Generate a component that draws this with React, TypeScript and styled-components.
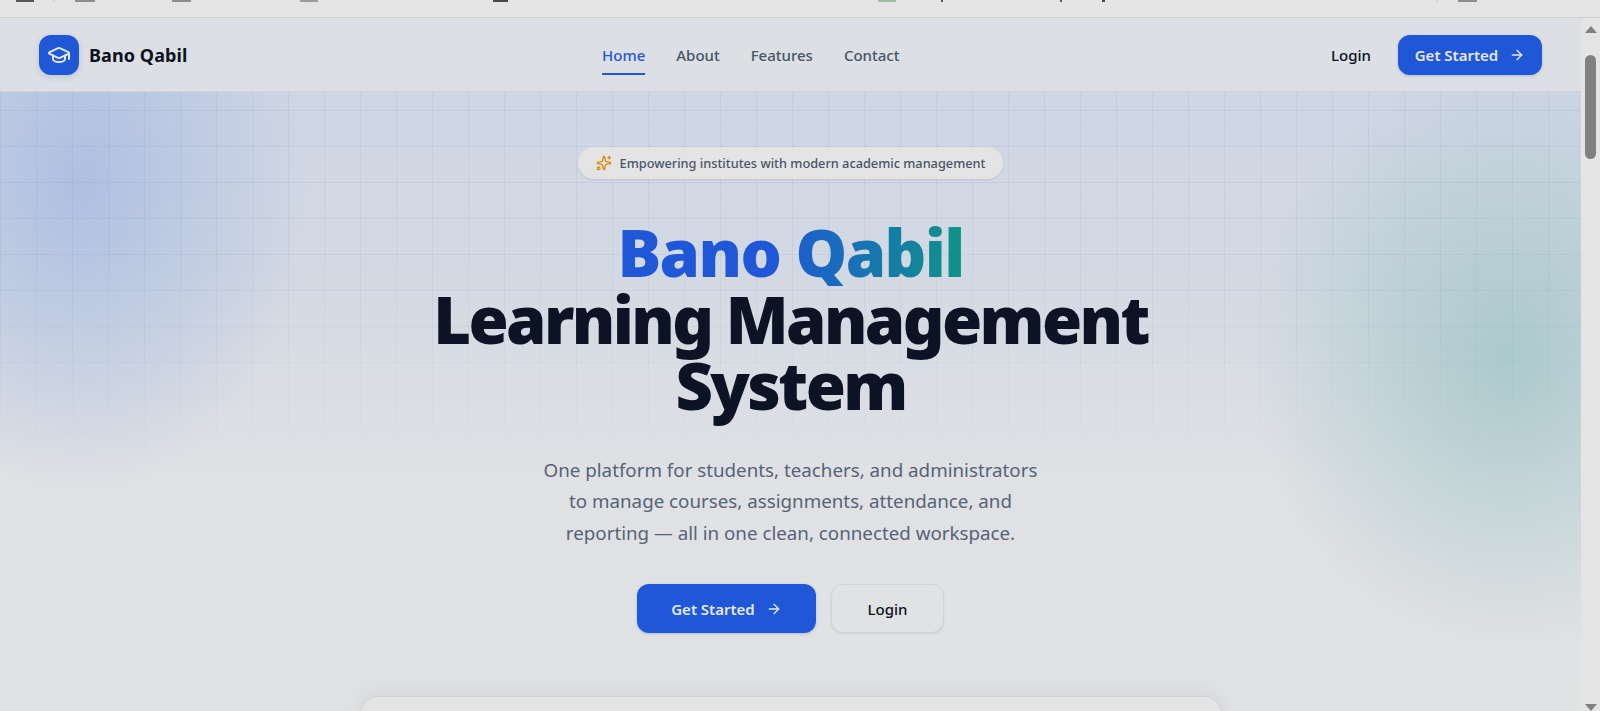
import React from 'react';
import styled, { createGlobalStyle } from 'styled-components';
import { ArrowRight, GraduationCap, Sparkles } from 'lucide-react';

const GlobalStyle = createGlobalStyle`
  html, body {
    margin: 0;
    height: 711px;
    overflow: hidden;
    background: #e2e3e5;
    font-family: "Noto Sans", "Open Sans", Arial, sans-serif;
  }
  * {
    box-sizing: border-box;
  }
`;

const Window = styled.div`
  width: 1600px;
  height: 711px;
  display: flex;
  flex-direction: column;
  overflow: hidden;
`;

const BrowserStrip = styled.div`
  height: 18px;
  flex: none;
  display: flex;
  align-items: flex-start;
  background: #e4e4e4;
  border-bottom: 1px solid #cfcfcf;
`;

const StripMark = styled.span<{ $left: number; $width: number; $color: string }>`
  height: 2px;
  margin-left: ${(p) => p.$left}px;
  width: ${(p) => p.$width}px;
  background: ${(p) => p.$color};
  opacity: 0.8;
`;

const Viewport = styled.div`
  flex: 1;
  min-height: 0;
  display: flex;
`;

const Page = styled.main`
  flex: 1;
  min-width: 0;
  display: flex;
  flex-direction: column;
`;

const Scrollbar = styled.div`
  width: 19px;
  flex: none;
  background: #e4e4e4;
  display: flex;
  flex-direction: column;
  align-items: center;
  padding-top: 8px;
`;

const ArrowUp = styled.span`
  width: 0;
  height: 0;
  border-left: 6px solid transparent;
  border-right: 6px solid transparent;
  border-bottom: 7px solid #808080;
`;

const ArrowDown = styled.span`
  width: 0;
  height: 0;
  margin-top: auto;
  border-left: 6px solid transparent;
  border-right: 6px solid transparent;
  border-top: 7px solid #808080;
`;

const Thumb = styled.div`
  width: 11px;
  height: 104px;
  margin-top: 22px;
  border-radius: 6px;
  background: #808080;
`;

const Nav = styled.header`
  height: 74px;
  flex: none;
  padding: 0 39px;
  display: flex;
  align-items: center;
  justify-content: space-between;
  background: #dcdfe3;
  border-bottom: 1px solid #cdd2db;
`;

const Brand = styled.div`
  display: flex;
  align-items: center;
  gap: 10px;
`;

const BrandMark = styled.div`
  width: 40px;
  height: 40px;
  border-radius: 12px;
  display: flex;
  align-items: center;
  justify-content: center;
  color: #e4e8f4;
  background: #1f57d6;
  box-shadow: 0 2px 6px rgba(29, 86, 216, 0.18);
`;

const BrandName = styled.span`
  font-size: 18px;
  font-weight: 700;
  letter-spacing: 0.005em;
  color: #0b1220;
`;

const NavLinks = styled.nav`
  display: flex;
  gap: 31px;
  margin-right: 17px;
`;

const NavLink = styled.a<{ $active?: boolean }>`
  height: 41px;
  display: flex;
  align-items: center;
  font-size: 15px;
  font-weight: 500;
  color: ${(p) => (p.$active ? '#1f57d6' : '#475569')};
  border-bottom: 2px solid ${(p) => (p.$active ? '#1f57d6' : 'transparent')};
  padding-top: 2px;
`;

const NavActions = styled.div`
  display: flex;
  align-items: center;
  gap: 27px;
`;

const TextLogin = styled.a`
  font-size: 15px;
  font-weight: 500;
  color: #0b1220;
`;

const PrimaryButton = styled.a<{ $large?: boolean }>`
  height: ${(p) => (p.$large ? 49 : 40)}px;
  width: ${(p) => (p.$large ? 179 : 144)}px;
  display: flex;
  align-items: center;
  justify-content: center;
  gap: 11px;
  font-size: 15px;
  font-weight: 600;
  color: #e4e8f4;
  background: #1f57d6;
  border-radius: 12px;
  box-shadow: 0 1px 3px rgba(29, 86, 216, 0.25);
`;

const SecondaryButton = styled.a`
  height: 49px;
  width: 113px;
  display: flex;
  align-items: center;
  justify-content: center;
  font-size: 15px;
  font-weight: 500;
  color: #0b1220;
  background: #e1e2e4;
  border: 1px solid #cfd3da;
  border-radius: 12px;
  box-shadow: 0 1px 2px rgba(15, 23, 42, 0.08);
`;

const Hero = styled.section`
  flex: 1;
  min-height: 0;
  position: relative;
  overflow: hidden;
  display: flex;
  flex-direction: column;
  align-items: center;
  padding-top: 55px;
  background:
    radial-gradient(ellipse 230px 310px at 80px 90px, rgba(160, 182, 224, 0.72), rgba(160, 182, 224, 0) 100%),
    radial-gradient(ellipse 260px 295px at 1510px 265px, rgba(150, 192, 194, 0.68), rgba(150, 192, 194, 0) 100%),
    linear-gradient(180deg, #cfd6e4 0%, #d3d9e3 30%, #dfe1e4 62%, #e1e2e4 100%);

  &::before {
    content: '';
    position: absolute;
    inset: 0;
    background-image:
      linear-gradient(to right, rgba(100, 116, 160, 0.09) 1px, transparent 1px),
      linear-gradient(to bottom, rgba(100, 116, 160, 0.09) 1px, transparent 1px);
    background-size: 36px 36px;
    background-position: 0 18px;
    -webkit-mask-image: linear-gradient(180deg, #000 0%, #000 25%, transparent 62%);
    mask-image: linear-gradient(180deg, #000 0%, #000 25%, transparent 62%);
  }
`;

const HeroContent = styled.div`
  position: relative;
  display: flex;
  flex-direction: column;
  align-items: center;
`;

const Pill = styled.div`
  height: 32px;
  padding: 0 18px;
  display: flex;
  align-items: center;
  gap: 8px;
  font-size: 12.75px;
  font-weight: 500;
  color: #475569;
  background: #e4e4e5;
  border-radius: 16px;
  box-shadow: 0 1px 2px rgba(15, 23, 42, 0.1);

  svg {
    color: #d98a0b;
  }
`;

const Title = styled.h1`
  margin: 40px 0 0;
  width: 800px;
  text-align: center;
  font-size: 65px;
  line-height: 66.5px;
  font-weight: 900;
  letter-spacing: -0.04em;
  color: #0b1324;
`;

const TitleAccent = styled.span`
  display: inline-block;
  letter-spacing: -0.025em;
  background: linear-gradient(90deg, #1f57d6 0%, #1f57d6 45%, #0f9488 100%);
  -webkit-background-clip: text;
  background-clip: text;
  color: transparent;
`;

const Lead = styled.p`
  margin: 35px 0 0;
  width: 560px;
  text-align: center;
  font-size: 18.75px;
  line-height: 31.5px;
  color: #566377;
`;

const HeroActions = styled.div`
  display: flex;
  gap: 15px;
  margin-top: 36px;
`;

const PreviewCard = styled.div`
  width: 862px;
  height: 120px;
  margin-top: 63px;
  flex: none;
  background: #e4e4e4;
  border: 1px solid #d0d3d9;
  border-radius: 18px;
  box-shadow: 0 -6px 24px rgba(15, 23, 42, 0.05);
`;

const stripMarks = [
  { left: 16, width: 18, color: '#333' },
  { left: 19, width: 2, color: '#eec3d0' },
  { left: 20, width: 20, color: '#777' },
  { left: 77, width: 19, color: '#777' },
  { left: 109, width: 18, color: '#888' },
  { left: 175, width: 15, color: '#222' },
  { left: 370, width: 18, color: '#8fb795' },
  { left: 45, width: 2, color: '#333' },
  { left: 117, width: 2, color: '#335' },
  { left: 40, width: 3, color: '#223' },
  { left: 331, width: 2, color: '#eec3d0' },
  { left: 20, width: 19, color: '#777' },
];

const navItems = ['Home', 'About', 'Features', 'Contact'];

const App: React.FC = () => {
  return (
    <>
      <GlobalStyle />
      <Window>
        <BrowserStrip>
          {stripMarks.map((mark, i) => (
            <StripMark key={i} $left={mark.left} $width={mark.width} $color={mark.color} />
          ))}
        </BrowserStrip>
        <Viewport>
          <Page>
            <Nav>
              <Brand>
                <BrandMark>
                  <GraduationCap size={24} strokeWidth={2} />
                </BrandMark>
                <BrandName>Bano Qabil</BrandName>
              </Brand>
              <NavLinks>
                {navItems.map((item) => (
                  <NavLink key={item} $active={item === 'Home'}>
                    {item}
                  </NavLink>
                ))}
              </NavLinks>
              <NavActions>
                <TextLogin>Login</TextLogin>
                <PrimaryButton>
                  Get Started
                  <ArrowRight size={16} />
                </PrimaryButton>
              </NavActions>
            </Nav>
            <Hero>
              <HeroContent>
                <Pill>
                  <Sparkles size={16} />
                  Empowering institutes with modern academic management
                </Pill>
                <Title>
                  <TitleAccent>Bano Qabil</TitleAccent>
                  <br />
                  Learning Management System
                </Title>
                <Lead>
                  One platform for students, teachers, and administrators
                  <br />
                  to manage courses, assignments, attendance, and
                  <br />
                  reporting — all in one clean, connected workspace.
                </Lead>
                <HeroActions>
                  <PrimaryButton $large>
                    Get Started
                    <ArrowRight size={16} />
                  </PrimaryButton>
                  <SecondaryButton>Login</SecondaryButton>
                </HeroActions>
                <PreviewCard />
              </HeroContent>
            </Hero>
          </Page>
          <Scrollbar>
            <ArrowUp />
            <Thumb />
            <ArrowDown />
          </Scrollbar>
        </Viewport>
      </Window>
    </>
  );
};

export default App;
